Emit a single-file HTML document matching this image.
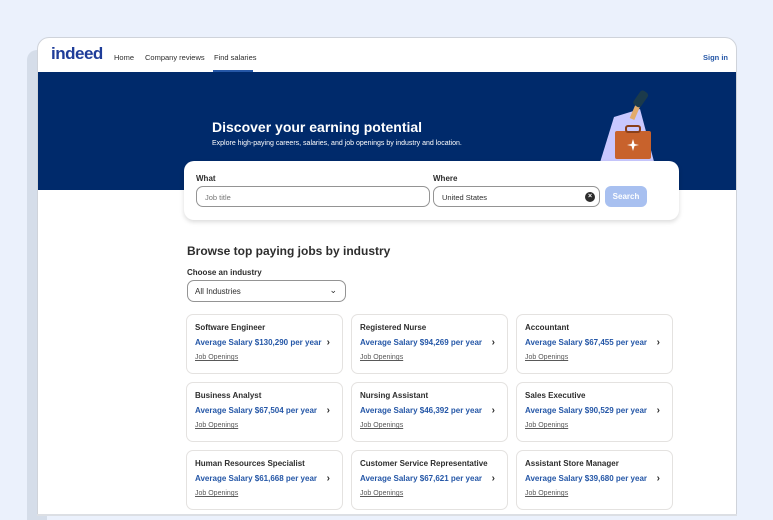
<!DOCTYPE html>
<html><head><style>
*{margin:0;padding:0;box-sizing:border-box}
body{width:773px;height:516px;overflow:hidden;background:#ebf1fc;font-family:"Liberation Sans",sans-serif;position:relative}
.shadow{position:absolute;left:27px;top:50px;width:20px;height:470px;background:#d5dde9;border-radius:10px 0 0 0}
.win{position:absolute;left:37px;top:37px;width:700px;height:478px;background:#fff;border:1px solid #cfd3da;border-radius:12px 12px 0 0;overflow:hidden}
.bottom{position:absolute;left:37px;top:514px;width:700px;height:2px;background:#dcdfe4}
.nav{height:34px;position:relative;font-size:7.5px;color:#2d2d2d}
.logo{position:absolute;left:13px;top:6px;font-size:17px;font-weight:bold;color:#1f3d99;letter-spacing:-0.5px}
.nav span.l{position:absolute;top:15px}
.ul{position:absolute;left:175px;top:32px;width:40px;height:2px;background:#2557a7}
.banner{position:absolute;left:0;top:34px;width:700px;height:118px;background:#002a6b}
h1{position:absolute;left:174px;top:47px;font-size:14px;color:#fff;font-weight:bold}
.sub{position:absolute;left:174px;top:68px;font-size:7px;color:#fff}
.sbox{position:absolute;left:146px;top:123px;width:495px;height:59px;background:#fff;border-radius:10px;box-shadow:0 2px 5px rgba(0,0,0,.15)}
.lab{position:absolute;font-size:8px;font-weight:bold;color:#2d2d2d}
.inp{position:absolute;height:21px;border:1px solid #949494;border-radius:7px;font-size:7.5px;color:#2d2d2d;padding:6px 8px}
.btn{position:absolute;left:421px;top:25px;width:42px;height:21px;background:#a8c0f0;border-radius:6px;color:#fff;font-size:8px;font-weight:bold;text-align:center;line-height:21px}
h2{position:absolute;left:149px;top:206px;font-size:12px;color:#2d2d2d;font-weight:bold}
.ci{position:absolute;left:149px;top:230px;font-size:8px;font-weight:bold;color:#2d2d2d}
.sel{position:absolute;left:149px;top:242px;width:159px;height:22px;border:1px solid #949494;border-radius:7px;font-size:8px;color:#2d2d2d;padding:6px 7px}
.card{position:absolute;width:157px;height:60px;border:1px solid #e4e2e0;border-radius:7px;padding:8px}
.card b{display:block;font-size:8px;color:#2d2d2d}
.card .s{display:block;margin-top:6px;font-size:8px;font-weight:bold;color:#2557a7;white-space:nowrap}
.card .s i{position:absolute;right:12px;font-style:normal;color:#2d2d2d;font-size:10px;font-weight:bold;margin-top:-1px}
.card u{display:block;margin-top:7px;font-size:7px;color:#595959}
</style></head><body>
<div class="shadow"></div>
<div class="win">
 <div class="nav">
  <div class="logo">indeed</div>
  <span class="l" style="left:76px">Home</span>
  <span class="l" style="left:107px">Company reviews</span>
  <span class="l" style="left:176px">Find salaries</span>
  <div class="ul"></div>
  <span class="l" style="left:665px;color:#2557a7;font-weight:bold">Sign in</span>
 </div>
 <div class="banner">
  <h1>Discover your earning potential</h1>
  <div class="sub">Explore high-paying careers, salaries, and job openings by industry and location.</div>
  <svg style="position:absolute;left:560px;top:7px" width="60" height="90" viewBox="0 0 60 90">
   <polygon points="16,38 42,30 58,90 0,90" fill="#c9c8ff"/>
   <path d="M34 40 L40 26" stroke="#e2ab6b" stroke-width="5"/>
   <rect x="38" y="11" width="9" height="17" rx="3" transform="rotate(35 42 20)" fill="#1b3a4b"/>
   <rect x="17" y="52" width="36" height="28" rx="2" fill="#c8622c"/>
   <rect x="28" y="47" width="14" height="6" rx="2" fill="none" stroke="#8a3f1a" stroke-width="2"/>
   <path d="M35 60 L36.5 65 L41 66 L36.5 67 L35 72 L33.5 67 L29 66 L33.5 65Z" fill="#fff"/>
  </svg>
 </div>
 <div class="sbox">
  <div class="lab" style="left:12px;top:13px">What</div>
  <div class="inp" style="left:12px;top:25px;width:234px;color:#767676">Job title</div>
  <div class="lab" style="left:249px;top:13px">Where</div>
  <div class="inp" style="left:249px;top:25px;width:167px">United States</div>
  <div style="position:absolute;left:401px;top:31px;width:10px;height:10px;border-radius:50%;background:#2d2d2d;color:#fff;font-size:7px;line-height:10px;text-align:center;font-weight:bold">×</div>
  <div class="btn">Search</div>
 </div>
 <h2>Browse top paying jobs by industry</h2>
 <div class="ci">Choose an industry</div>
 <div class="sel">All Industries<span style="position:absolute;right:8px;top:4px;font-size:9px">⌄</span></div>

 <div class="card" style="left:148px;top:276px"><b>Software Engineer</b><span class="s">Average Salary $130,290 per year<i>›</i></span><u>Job Openings</u></div>
 <div class="card" style="left:313px;top:276px"><b>Registered Nurse</b><span class="s">Average Salary $94,269 per year<i>›</i></span><u>Job Openings</u></div>
 <div class="card" style="left:478px;top:276px"><b>Accountant</b><span class="s">Average Salary $67,455 per year<i>›</i></span><u>Job Openings</u></div>
 <div class="card" style="left:148px;top:344px"><b>Business Analyst</b><span class="s">Average Salary $67,504 per year<i>›</i></span><u>Job Openings</u></div>
 <div class="card" style="left:313px;top:344px"><b>Nursing Assistant</b><span class="s">Average Salary $46,392 per year<i>›</i></span><u>Job Openings</u></div>
 <div class="card" style="left:478px;top:344px"><b>Sales Executive</b><span class="s">Average Salary $90,529 per year<i>›</i></span><u>Job Openings</u></div>
 <div class="card" style="left:148px;top:412px"><b>Human Resources Specialist</b><span class="s">Average Salary $61,668 per year<i>›</i></span><u>Job Openings</u></div>
 <div class="card" style="left:313px;top:412px"><b>Customer Service Representative</b><span class="s">Average Salary $67,621 per year<i>›</i></span><u>Job Openings</u></div>
 <div class="card" style="left:478px;top:412px"><b>Assistant Store Manager</b><span class="s">Average Salary $39,680 per year<i>›</i></span><u>Job Openings</u></div>
</div>
<div class="bottom"></div>
</body></html>
